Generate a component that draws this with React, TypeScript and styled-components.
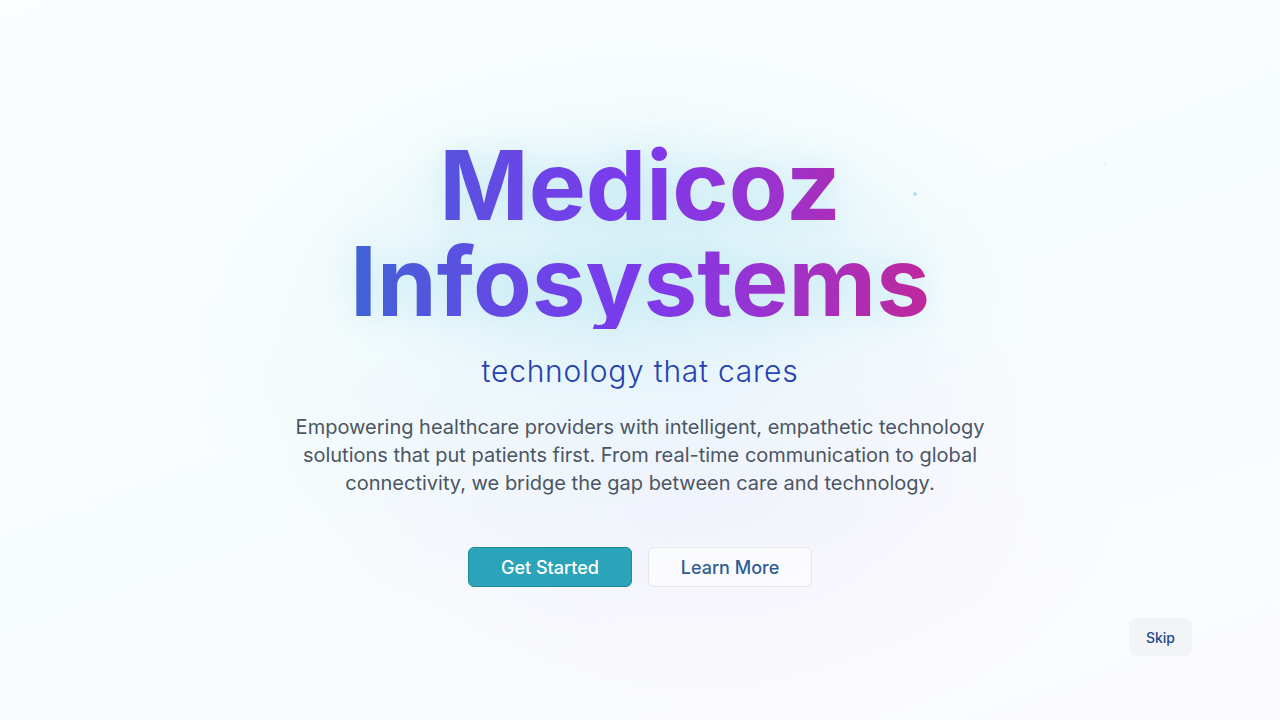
import React from "react";
import styled, { createGlobalStyle } from "styled-components";

const GlobalStyle = createGlobalStyle`
  html, body { margin: 0; padding: 0; }
  body {
    font-family: Inter, "Noto Sans", sans-serif;
    background: #f9fcfd;
    overflow: hidden;
  }
  * { box-sizing: border-box; }
`;

const Page = styled.main`
  position: relative;
  width: 1280px;
  height: 720px;
  overflow: hidden;
  display: flex;
  flex-direction: column;
  align-items: center;
  justify-content: center;
  padding-top: 4px;
  background:
    radial-gradient(ellipse 320px 150px at 640px 255px, rgba(208, 238, 246, 0.75), rgba(208, 238, 246, 0) 100%),
    radial-gradient(ellipse 440px 310px at 620px 330px, rgba(226, 245, 250, 0.7), rgba(226, 245, 250, 0) 100%),
    radial-gradient(ellipse 420px 240px at 700px 500px, rgba(246, 240, 252, 0.8), rgba(246, 240, 252, 0) 100%),
    linear-gradient(160deg, #fbfefe 0%, #f7fcfd 50%, #fbfbfe 100%);
`;

const Dot = styled.span<{ $size: number; $color: string }>`
  position: absolute;
  width: ${(p) => p.$size}px;
  height: ${(p) => p.$size}px;
  border-radius: 50%;
  background: ${(p) => p.$color};
`;

const Title = styled.h1`
  margin: 0;
  display: inline-block;
  text-align: center;
  font-family: Inter, sans-serif;
  font-weight: 700;
  font-size: 96px;
  line-height: 96px;
  letter-spacing: 0;
  background: linear-gradient(90deg, #3f63d6 0%, #6a46e6 30%, #7c3aed 50%, #9a33cf 72%, #c0289b 100%);
  -webkit-background-clip: text;
  background-clip: text;
  color: transparent;
  filter: drop-shadow(0 0 16px rgba(120, 210, 235, 0.28));
`;

const Tagline = styled.p`
  margin: 24px 0 0;
  font-family: Inter, sans-serif;
  font-weight: 300;
  font-size: 30px;
  line-height: 36px;
  letter-spacing: 0.025em;
  color: #2541b2;
`;

const Lead = styled.p`
  margin: 24px 0 0;
  max-width: 720px;
  text-align: center;
  font-family: Inter, sans-serif;
  font-weight: 400;
  font-size: 20px;
  line-height: 28px;
  color: #4b5563;
`;

const Actions = styled.div`
  margin-top: 50px;
  display: flex;
  gap: 16px;
`;

const Button = styled.button<{ $primary?: boolean }>`
  width: 164px;
  height: 40px;
  border-radius: 6px;
  font-family: Inter, sans-serif;
  font-weight: 500;
  font-size: 18px;
  cursor: pointer;
  border: 1px solid ${(p) => (p.$primary ? "#1f8c9e" : "#e5e7eb")};
  background: ${(p) => (p.$primary ? "#2ba3b9" : "rgba(255,255,255,0.6)")};
  color: ${(p) => (p.$primary ? "#ffffff" : "#2f5d93")};
`;

const Skip = styled.button`
  position: absolute;
  right: 88px;
  bottom: 64px;
  width: 63px;
  height: 38px;
  border: none;
  border-radius: 8px;
  background: #f3f4f6;
  color: #1e4a8a;
  font-family: Inter, sans-serif;
  font-weight: 500;
  font-size: 14px;
  cursor: pointer;
`;

export default function App() {
  return (
    <>
      <GlobalStyle />
      <Page>
        <Dot $size={4} $color="#b3e3ef" style={{ left: 913, top: 192 }} />
        <Dot $size={3} $color="#e3f3f6" style={{ left: 1104, top: 163 }} />
        <Title>
          Medicoz
          <br />
          Infosystems
        </Title>
        <Tagline>technology that cares</Tagline>
        <Lead>
          Empowering healthcare providers with intelligent, empathetic technology solutions that put
          patients first. From real-time communication to global connectivity, we bridge the gap
          between care and technology.
        </Lead>
        <Actions>
          <Button $primary>Get Started</Button>
          <Button>Learn More</Button>
        </Actions>
        <Skip>Skip</Skip>
      </Page>
    </>
  );
}
